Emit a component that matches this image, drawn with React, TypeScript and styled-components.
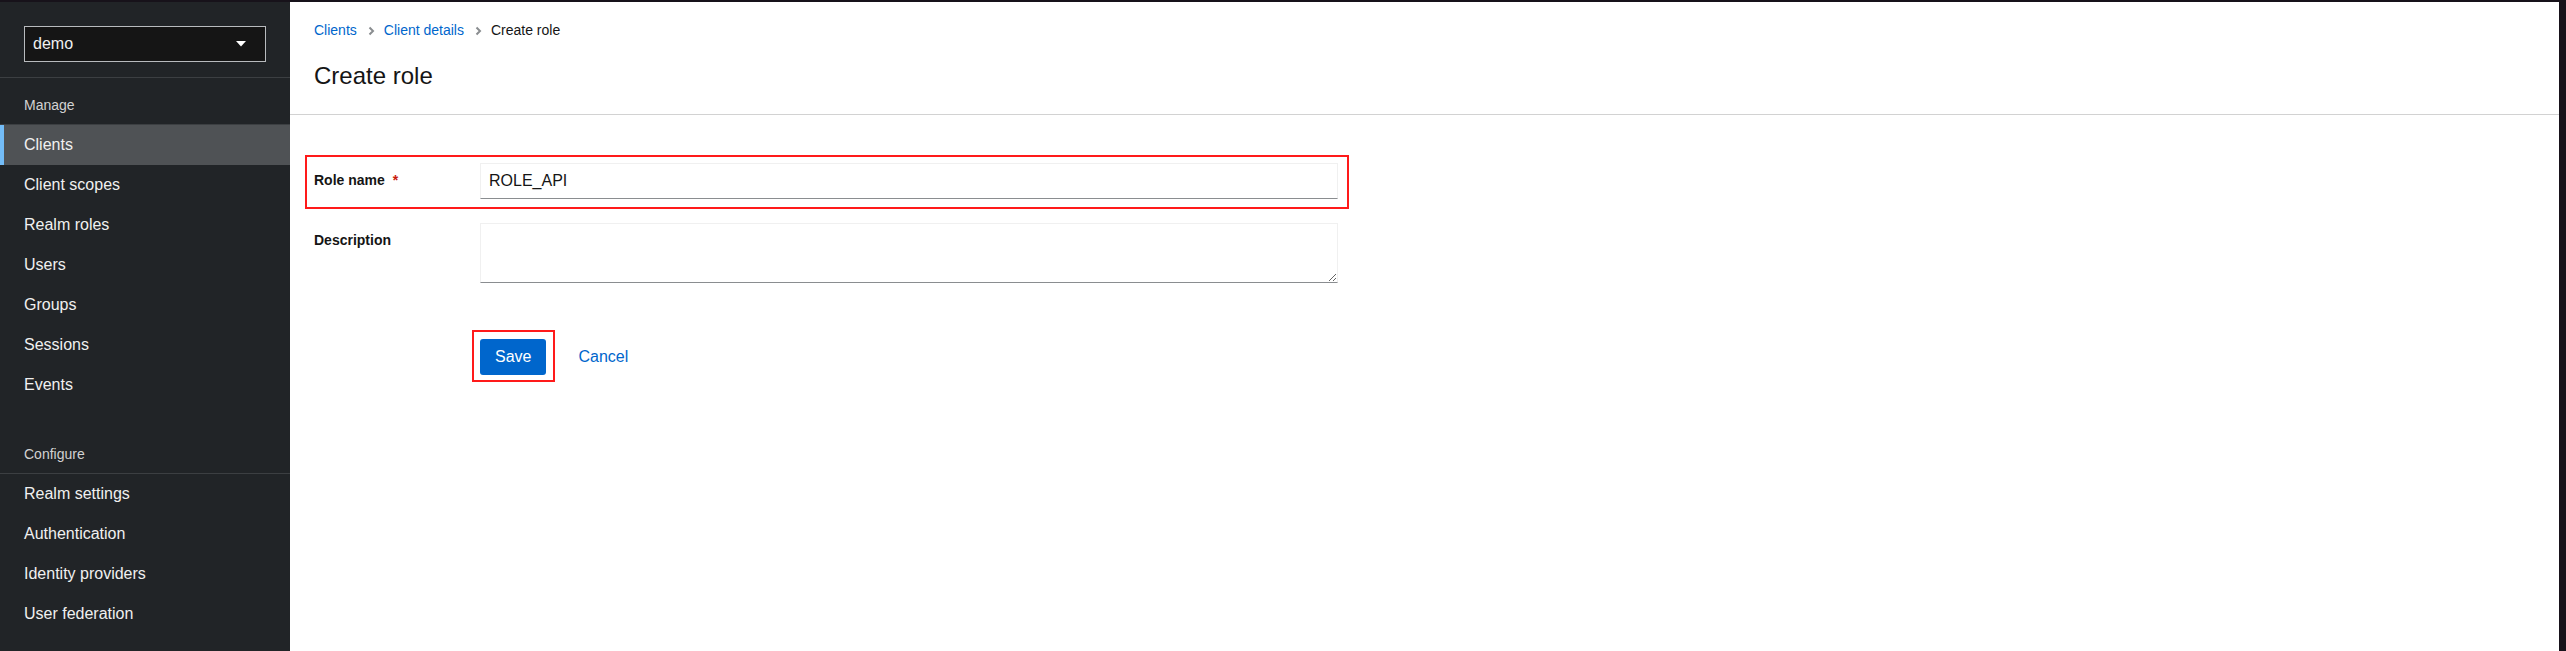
import React from "react";
import styled, { createGlobalStyle } from "styled-components";

const GlobalStyle = createGlobalStyle`
  html, body, #root {
    margin: 0;
    height: 100%;
  }
  body {
    font-family: "Liberation Sans", Arial, sans-serif;
    background: #17121a;
  }
  * {
    box-sizing: border-box;
  }
`;

const Frame = styled.div`
  display: flex;
  height: 100%;
  padding: 2px 7px 0 0;
  background: #17121a;
`;

const Sidebar = styled.nav`
  width: 290px;
  flex-shrink: 0;
  background: #212427;
  display: flex;
  flex-direction: column;
  overflow: hidden;
`;

const RealmBox = styled.div`
  padding: 24px 24px 15px;
  border-bottom: 1px solid #3c3f42;
`;

const RealmSelect = styled.div`
  height: 36px;
  display: flex;
  align-items: center;
  justify-content: space-between;
  padding: 0 19px 0 8px;
  background: #151515;
  border: 1px solid #b8bbbe;
  color: #f0f0f0;
  font-size: 16px;
`;

const SectionTitle = styled.div<{ $first?: boolean }>`
  margin-top: ${(p) => (p.$first ? "17px" : "39px")};
  padding: 0 24px 8px;
  line-height: 21px;
  font-size: 14px;
  color: #d2d2d2;
  border-bottom: 1px solid #3c3f42;
`;

const NavItem = styled.div<{ $active?: boolean }>`
  height: 40px;
  display: flex;
  align-items: center;
  padding-left: ${(p) => (p.$active ? "20px" : "24px")};
  font-size: 16px;
  color: #f0f0f0;
  background: ${(p) => (p.$active ? "#4f5255" : "transparent")};
  border-left: ${(p) => (p.$active ? "4px solid #73bcf7" : "none")};
`;

const Main = styled.main`
  flex: 1;
  background: #ffffff;
  display: flex;
  flex-direction: column;
`;

const Header = styled.header`
  padding: 18px 24px 23px;
  border-bottom: 1px solid #d2d2d2;
`;

const Breadcrumb = styled.ol`
  list-style: none;
  margin: 0;
  padding: 0;
  display: flex;
  align-items: center;
  font-size: 14px;
  line-height: 21px;
`;

const Crumb = styled.li<{ $link?: boolean }>`
  display: flex;
  align-items: center;
  color: ${(p) => (p.$link ? "#0066cc" : "#151515")};
`;

const Sep = styled.span`
  display: inline-flex;
  margin: 0 9px 0 11px;
  color: #8a8d90;
`;

const Title = styled.h1`
  margin: 20px 0 0;
  font-size: 24px;
  line-height: 30px;
  font-weight: 400;
  color: #151515;
`;

const Form = styled.form`
  width: 1024px;
  margin: 48px 0 0 24px;
  display: flex;
  flex-direction: column;
  gap: 24px;
`;

const Row = styled.div<{ $marked?: boolean }>`
  position: relative;
  display: grid;
  grid-template-columns: 150px 1fr;
  column-gap: 16px;
  &::after {
    content: "";
    display: ${(p) => (p.$marked ? "block" : "none")};
    position: absolute;
    top: -8px;
    left: -9px;
    right: -11px;
    bottom: -10px;
    border: 2px solid #ff1a1a;
    pointer-events: none;
  }
`;

const Label = styled.label`
  padding-top: 7px;
  font-size: 14px;
  line-height: 21px;
  font-weight: 700;
  color: #151515;
`;

const Req = styled.span`
  margin-left: 8px;
  color: #c9190b;
`;

const Input = styled.input`
  height: 36px;
  padding: 0 8px;
  font-family: inherit;
  font-size: 16px;
  color: #151515;
  border: 1px solid;
  border-color: #f0f0f0 #f0f0f0 #8a8d90 #f0f0f0;
  outline: none;
`;

const TextArea = styled.textarea`
  height: 60px;
  padding: 6px 8px;
  font-family: inherit;
  font-size: 16px;
  border: 1px solid;
  border-color: #f0f0f0 #f0f0f0 #8a8d90 #f0f0f0;
  outline: none;
  resize: vertical;
`;

const Actions = styled.div`
  display: flex;
  align-items: center;
  margin: 32px 0 0 166px;
`;

const Marked = styled.div`
  position: relative;
  &::after {
    content: "";
    position: absolute;
    top: -9px;
    left: -8px;
    right: -9px;
    bottom: -7px;
    border: 2px solid #ff1a1a;
    pointer-events: none;
  }
`;

const Button = styled.button<{ $variant: "primary" | "link" }>`
  height: 36px;
  padding: 0 ${(p) => (p.$variant === "primary" ? "15px" : "16px")};
  margin-left: ${(p) => (p.$variant === "link" ? "16px" : "0")};
  font-family: inherit;
  font-size: 16px;
  border: none;
  border-radius: 3px;
  color: ${(p) => (p.$variant === "primary" ? "#ffffff" : "#0066cc")};
  background: ${(p) => (p.$variant === "primary" ? "#0066cc" : "transparent")};
`;

const Chevron = () => (
  <svg width="7" height="10" viewBox="0 0 7 10">
    <path d="M1.5 1.5 L5 5 L1.5 8.5" stroke="currentColor" strokeWidth="2" fill="none" />
  </svg>
);

const Caret = () => (
  <svg width="10" height="6" viewBox="0 0 10 6">
    <path d="M0 0 H10 L5 5.5 Z" fill="#ffffff" />
  </svg>
);

const manage = ["Clients", "Client scopes", "Realm roles", "Users", "Groups", "Sessions", "Events"];
const configure = ["Realm settings", "Authentication", "Identity providers", "User federation"];

export default function App() {
  return (
    <>
      <GlobalStyle />
      <Frame>
        <Sidebar>
          <RealmBox>
            <RealmSelect>
              <span>demo</span>
              <Caret />
            </RealmSelect>
          </RealmBox>
          <SectionTitle $first>Manage</SectionTitle>
          {manage.map((m) => (
            <NavItem key={m} $active={m === "Clients"}>
              {m}
            </NavItem>
          ))}
          <SectionTitle>Configure</SectionTitle>
          {configure.map((m) => (
            <NavItem key={m}>{m}</NavItem>
          ))}
        </Sidebar>
        <Main>
          <Header>
            <Breadcrumb>
              <Crumb $link>Clients</Crumb>
              <Sep>
                <Chevron />
              </Sep>
              <Crumb $link>Client details</Crumb>
              <Sep>
                <Chevron />
              </Sep>
              <Crumb>Create role</Crumb>
            </Breadcrumb>
            <Title>Create role</Title>
          </Header>
          <Form onSubmit={(e) => e.preventDefault()}>
            <Row $marked>
              <Label>
                Role name<Req>*</Req>
              </Label>
              <Input defaultValue="ROLE_API" />
            </Row>
            <Row>
              <Label>Description</Label>
              <TextArea />
            </Row>
            <Actions>
              <Marked>
                <Button $variant="primary" type="button">
                  Save
                </Button>
              </Marked>
              <Button $variant="link" type="button">
                Cancel
              </Button>
            </Actions>
          </Form>
        </Main>
      </Frame>
    </>
  );
}
